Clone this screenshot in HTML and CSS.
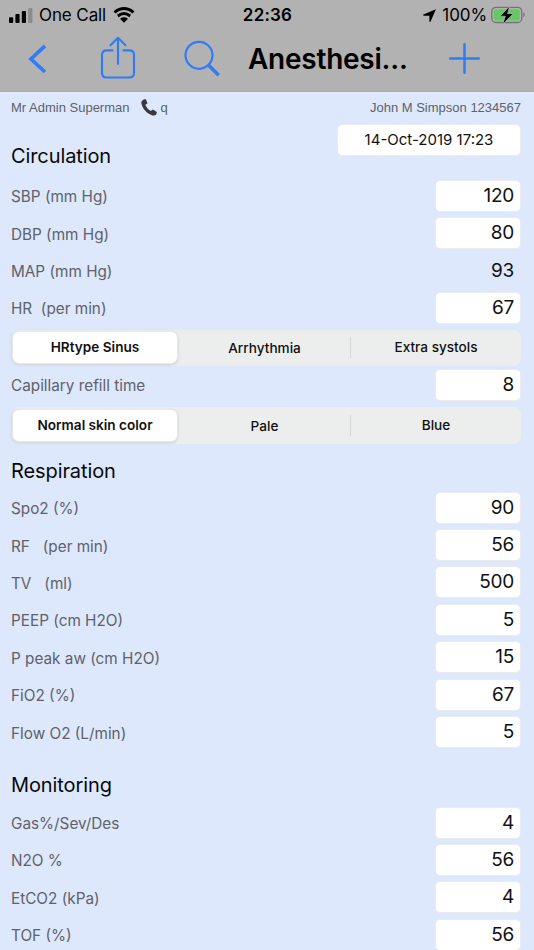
FILE: index.html
```html
<!DOCTYPE html>
<html lang="en">
<head>
<meta charset="utf-8">
<title>Anesthesia</title>
<link rel="stylesheet" href="styles.css">
</head>
<body>
<div class="app">
  <header class="top">
    <div class="status">
      <div class="status-left">
        <svg class="signal" width="24" height="15" viewBox="0 0 24 15"><rect x="0" y="9.3" width="4.2" height="5.7" rx="1"/><rect x="6.4" y="6" width="4.2" height="9" rx="1"/><rect x="12.8" y="3" width="4.2" height="12" rx="1"/><rect x="19.2" y="0" width="4.2" height="15" rx="1" fill="#8b8b8b"/></svg>
        <span class="carrier">One Call</span>
        <svg class="wifi" width="22" height="16" viewBox="0 0 22 16"><g fill="none" stroke="#000" stroke-width="2.9"><path d="M1.4 5.3Q11-2.3 20.6 5.3"/><path d="M4.8 9Q11 4.2 17.2 9"/></g><path d="M7 11.7Q11 8.8 15 11.7L11 15.7Z"/></svg>
      </div>
      <span class="clock">22:36</span>
      <div class="status-right">
        <svg class="loc" width="13" height="13" viewBox="0 0 13 13"><path d="M12.9.3 7.6 12.5Q6.9 13.5 6.4 12.4V6.7H.7Q-.5 6.2.5 5.5Z"/></svg>
        <span class="percent">100%</span>
        <svg class="battery" width="35" height="20" viewBox="0 0 35 20"><rect x=".8" y="2.3" width="30" height="15.2" rx="4.3" fill="none" stroke="#747474" stroke-width="1.3"/><rect x="2.9" y="4.3" width="25.8" height="11.2" rx="2.3" fill="#62c963"/><path d="M32.3 7.2Q35.4 9.8 32.3 12.6Z" fill="#747474"/><path d="M18.8.9 9 11.2h5.3l-2.7 8L22.6 8.5h-6Z" stroke="#b2b2b2" stroke-width=".8"/></svg>
      </div>
    </div>
    <nav class="nav">
      <svg class="back" width="20" height="30" viewBox="0 0 20 30"><path d="M17 1.8 3 15l14 13"/></svg>
      <svg class="share" width="36" height="44" viewBox="0 0 36 44"><path d="M12.5 14.4H6.6Q2 14.4 2 19v18Q2 41.5 6.6 41.5h22.8Q34 41.5 34 37V19q0-4.6-4.6-4.6h-5.9M18 28V2M10.5 9.3 18 1.8l7.5 7.5"/></svg>
      <svg class="search" width="37" height="38" viewBox="0 0 37 38"><circle cx="15" cy="15.3" r="13.5"/><path d="m24.7 25.2 10 10" class="handle"/></svg>
      <h1>Anesthesi...</h1>
      <svg class="plus" width="31" height="31" viewBox="0 0 31 31"><path d="M15.5 1.2v28.6M1.2 15.5h28.6"/></svg>
    </nav>
  </header>
  <main>
    <div class="people">
      <span class="user">Mr Admin Superman</span>
      <svg class="phone" width="16" height="17" viewBox="0 0 16 17"><path d="M2.2.8 4.7.1 6.5 4.2 4.3 6Q6.2 10.2 9.8 12l2.1-1.5 4 2.5-.6 2.4Q13.7 17 11.5 16.4C5.8 14.7 1.3 9.5.3 4Q0 2 2.2.8Z"/></svg>
      <span>q</span>
      <span class="patient">John M Simpson 1234567</span>
    </div>
    <div class="section-head first"><h2>Circulation</h2><div class="date">14-Oct-2019 17:23</div></div>
    <div class="row"><label>SBP (mm Hg)</label><output>120</output></div>
    <div class="row"><label>DBP (mm Hg)</label><output>80</output></div>
    <div class="row"><label>MAP (mm Hg)</label><output class="plain">93</output></div>
    <div class="row"><label>HR&nbsp; (per min)</label><output>67</output></div>
    <div class="segments"><span class="on">HRtype Sinus</span><span>Arrhythmia</span><span class="split">Extra systols</span></div>
    <div class="row"><label>Capillary refill time</label><output>8</output></div>
    <div class="segments second"><span class="on">Normal skin color</span><span>Pale</span><span class="split">Blue</span></div>
    <div class="section-head resp"><h2>Respiration</h2></div>
    <div class="row"><label>Spo2 (%)</label><output>90</output></div>
    <div class="row"><label>RF &nbsp; (per min)</label><output>56</output></div>
    <div class="row"><label>TV &nbsp; (ml)</label><output>500</output></div>
    <div class="row"><label>PEEP (cm H2O)</label><output>5</output></div>
    <div class="row"><label>P peak aw (cm H2O)</label><output>15</output></div>
    <div class="row"><label>FiO2 (%)</label><output>67</output></div>
    <div class="row last"><label>Flow O2 (L/min)</label><output>5</output></div>
    <div class="section-head mon"><h2>Monitoring</h2></div>
    <div class="row"><label>Gas%/Sev/Des</label><output>4</output></div>
    <div class="row"><label>N2O %</label><output>56</output></div>
    <div class="row"><label>EtCO2 (kPa)</label><output>4</output></div>
    <div class="row"><label>TOF (%)</label><output>56</output></div>
  </main>
</div>
</body>
</html>
```
FILE: styles.css
```css
* { box-sizing: border-box; }
body { margin: 0; background: #dde8fd; font-family: Inter, "Liberation Sans", sans-serif; color: #111; }
.app { width: 534px; height: 950px; overflow: hidden; }
svg { display: block; flex: none; }
.top { height: 92px; background: #b2b2b2; border-bottom: 1px solid #a5a9b1; }
.status { height: 30px; display: grid; grid-template-columns: 1fr auto 1fr; align-items: center; padding: 0 8px 0 9px; color: #000; font-size: 17px; }
.status-left, .status-right { display: flex; align-items: center; }
.carrier { margin-left: 6px; letter-spacing: -.1px; }
.wifi { margin-left: 7px; }
.clock { font-weight: 600; letter-spacing: .2px; }
.status-right { justify-content: flex-end; }
.loc { margin-right: 1px; }
.percent { margin: 0 4px 0 5px; letter-spacing: -.1px; }
.nav { height: 58px; display: flex; align-items: center; padding-left: 28px; }
.nav svg { fill: none; stroke: #2f7cf6; stroke-linecap: round; stroke-linejoin: round; }
.nav .back { stroke-width: 3.7; }
.back path { stroke-linecap: butt; stroke-linejoin: miter; }
.nav .share { stroke-width: 2.1; margin-left: 52px; margin-top: -3px; }
.nav .search { stroke-width: 2.2; margin-left: 48px; margin-top: -1px; }
.handle { stroke-width: 3.5; stroke-linecap: butt; }
.nav h1 { margin: 0 0 0 27px; width: 201px; font-size: 28px; font-weight: 600; letter-spacing: -.25px; color: #000; }
.nav .plus { stroke-width: 2.5; margin-top: -1px; }
main { padding: 0 13px 0 11px; }
.people { height: 31px; display: flex; align-items: center; font-family: "Liberation Sans", sans-serif; font-size: 13px; color: #606268; }
.phone { margin: 0 4px 0 11px; fill: #36383b; }
.patient { margin-left: auto; }
.section-head { display: flex; }
h2 { margin: 0; font-size: 20px; line-height: 26px; font-weight: 400; letter-spacing: -.1px; color: #080808; }
.first { height: 54px; align-items: flex-start; justify-content: space-between; }
.first h2 { margin-top: 20px; }
.date { width: 184px; height: 32px; margin-top: 1px; border: 1px solid #e9ebef; border-radius: 5px; background: #fff; text-align: center; font-size: 15px; line-height: 30px; }
.row { height: 37.35px; display: flex; align-items: center; justify-content: space-between; }
label { padding-top: 2px; color: #606268; font-size: 15.3px; }
output { width: 86px; height: 32px; border: 1px solid #e9ebef; border-radius: 5px; background: #fff; padding-right: 6px; text-align: right; font-size: 19px; line-height: 30px; letter-spacing: -.25px; }
output.plain { background: none; border-color: transparent; line-height: 32px; }
.segments { height: 36px; margin: 3.6px 0 0 1px; display: grid; grid-template-columns: 167px 171px 1fr; align-items: center; background: #eceeed; border-radius: 8px; text-align: center; font-size: 13.6px; font-weight: 500; }
.segments .on { height: 33px; line-height: 31px; margin-right: 1px; background: #fff; border-radius: 7px; font-weight: 600; border: 1px solid #e8e8e8; box-shadow: 0 1px 3px #0002; }
.split { border-left: 1px solid #d5d6d7; line-height: 21px; }
.second { height: 37px; margin-top: 3.8px; }
.resp { height: 45px; padding-top: 14px; }
.last { height: 38.2px; }
.mon { height: 52.5px; padding-top: 21px; }
```
